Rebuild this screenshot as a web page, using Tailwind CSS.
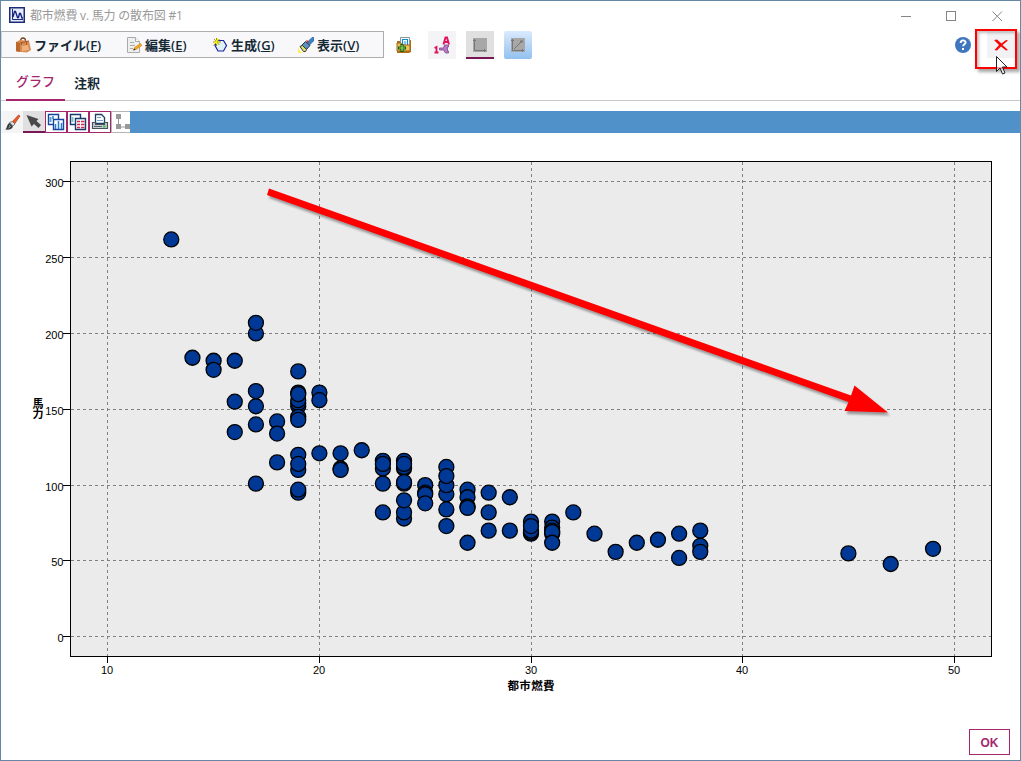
<!DOCTYPE html>
<html lang="ja">
<head>
  <meta charset="UTF-8" />
  <meta name="viewport" content="width=device-width, initial-scale=1.0" />
  <title>都市燃費 v. 馬力 の散布図 #1</title>
  <script src="https://cdn.jsdelivr.net/npm/@tailwindcss/browser@4"></script>
</head>
<body class="bg-white font-['Open_Sans','Noto_Sans_CJK_JP',sans-serif]">

  <div class="relative w-[1021px] h-[761px] flex flex-col overflow-hidden border border-[#6588a5] bg-white">

    <!-- title bar -->
    <header class="h-[30px] shrink-0 flex items-center pl-2 text-[#999999]">
      <svg class="w-4 h-4 shrink-0 -mt-[2px]" viewBox="0 0 16 16">
        <rect x=".75" y=".75" width="14.5" height="14.5" fill="#e4edf9" stroke="#1c2a78" stroke-width="1.5" />
        <path d="M3.500 2v10.500H14" fill="none" stroke="#1c2a78" />
        <path d="M4 10l1.500-5.500h1l2 6h1l1-4h1l1.500 4.500h1" fill="none" stroke="#101c80" stroke-width="1.300" />
      </svg>
      <span class="ml-[5px] w-[160px] whitespace-nowrap text-[12px] leading-4 tracking-[-0.2px]">都市燃費 v. 馬力 の散布図 #1</span>
      <svg class="ml-auto mr-[17px] w-[102px] h-[11px]" viewBox="0 0 102 11" fill="none" stroke="#858585">
        <path d="M0 5.500h10" />
        <rect x="45.500" y=".5" width="9" height="9" />
        <path d="M91.500 .5l9.500 9.500M101 .5l-9.500 9.500" />
      </svg>
    </header>

    <!-- menu and tool buttons -->
    <div class="h-[28px] shrink-0 flex items-center">
      <nav class="w-[383px] h-[27px] -mt-px flex items-center border border-l-[#d0d0d0] border-[#adadad] bg-[#f8f8fb] text-[13px] leading-5 font-semibold text-[#152935] whitespace-nowrap">
        <div class="w-[124px] pl-[13px] flex items-center gap-[3px]">
          <svg class="w-4 h-4 shrink-0" viewBox="0 0 16 16">
            <path d="M5.500 4c0-4 5-4 5 0" fill="none" stroke="#7c3e1b" stroke-width="1.300" />
            <path d="M1 5l4-2 9 1 2 9-4 2.500-11-1z" fill="#d98a51" />
            <path d="M1 5l4 1 0 9-4-1z" fill="#b9672f" />
            <path d="M5 6l9-2M6.500 5v3M11.500 5v3" stroke="#a55c2d" />
            <path d="M7 9l6-1 1 5-7 1z" fill="#efb17d" />
          </svg>
          <span>ファイル(<u>F</u>)</span>
        </div>
        <div class="w-[86px] flex items-center gap-[3px]">
          <svg class="w-4 h-4 shrink-0" viewBox="0 0 16 16">
            <path d="M1.500 .5h8l4 4v11h-12z" fill="#eef0ee" stroke="#aaa" />
            <path d="M9.500 .5v4h4" fill="#fff" stroke="#aaa" />
            <path d="M4 5.500h4M4 8.500h5M4 11.500h3" stroke="#aaa" />
            <path d="M7.500 13l1-2.500 6-4 1.500 2-6 4z" fill="#f5a51c" stroke="#c07a18" stroke-width=".5" />
            <path d="M7 13.500l1.500-2 1 1.200z" fill="#222" />
          </svg>
          <span>編集(<u>E</u>)</span>
        </div>
        <div class="w-[86px] flex items-center gap-[3px]">
          <svg class="w-4 h-4 shrink-0" viewBox="0 0 16 16">
            <path d="M6 3.500h5.500l3 5-3 5.500h-5.500l-3-5.500z" fill="#dff2fa" stroke="#1a22a0" stroke-width="1.200" />
            <path d="M4.500 1v8M1 5h8M2 2l5.500 6M7.500 2L1.500 8.500" stroke="#9b9200" />
            <path d="M4.500 3v4M3 5h4M5.500 1.500v2M2 5.500h2" stroke="#fff000" stroke-width="1.200" />
          </svg>
          <span>生成(<u>G</u>)</span>
        </div>
        <div class="flex items-center gap-[3px]">
          <svg class="w-4 h-4 shrink-0" viewBox="0 0 16 16">
            <path d="M0 16v-5l4 5z" fill="#fff04b" />
            <path d="M9 5.500l5-5h2v3l-5 5z" fill="#3b82cb" stroke="#235486" stroke-width=".6" />
            <path d="M3.500 8.500l4-4 4.500 4-4 4.500z" fill="#5d91bd" stroke="#253a51" />
            <path d="M2 9.500l2.500-1 4 4-1 2h-2z" fill="#e5de70" stroke="#343b35" />
            <path d="M8.500 3.500l2 2" stroke="#d22d20" stroke-width="1.500" />
          </svg>
          <span>表示(<u>V</u>)</span>
        </div>
      </nav>

      <svg class="ml-[12px] w-4 h-4 shrink-0" viewBox="0 0 16 16">
        <path d="M1 4h3v-1h11v12l-2 1H1z" fill="#ac7019" />
        <path d="M4.500 .5h9v8h-9z" fill="#fff" stroke="#8796a5" />
        <path d="M6.500 8V2.500h5V8M8 5h2M8 7h2" fill="none" stroke="#148bd5" stroke-width="1.200" />
        <path d="M1 6h4l1 2h8v6H1z" fill="#edc35e" stroke="#9c6418" />
        <path d="M6 7v8M2 11h8" stroke="#165d12" stroke-width="3.200" />
        <path d="M6 8v6M3 11h6" stroke="#8fe15c" stroke-width="1.200" />
      </svg>

      <div class="ml-[16px] w-7 h-7 shrink-0 bg-[#f4f4f7]">
        <svg class="w-7 h-7" viewBox="0 0 28 28">
          <path d="M15.500 13.500l2-7h1.500l2 7M16.500 11h3.500" fill="none" stroke="#e3115b" stroke-width="1.900" />
          <path d="M6.500 17l2-1v6.500M6.500 21.500h4" fill="none" stroke="#e3115b" stroke-width="1.800" />
          <path d="M11.500 17h4l1-3h4v2h-1v4h1v2h-3l-2-3h-4z" fill="#b77ac5" stroke="#81468e" stroke-width=".8" />
        </svg>
      </div>

      <div class="ml-[10px] w-7 h-7 shrink-0 bg-[#e0e0e0] border-b-2 border-[#7b1654]">
        <svg class="w-7 h-[26px]" viewBox="0 0 28 26">
          <rect x="7" y="7" width="14" height="14" fill="#a7a7a7" />
          <path d="M8.500 8v11.500H20M7 9.500h3M18.500 18v3" fill="none" stroke="#777" />
        </svg>
      </div>

      <div class="ml-[10px] w-7 h-7 shrink-0 rounded-[2px] bg-linear-to-b from-[#dbeafd] to-[#92c1ef]">
        <svg class="w-7 h-7" viewBox="0 0 28 28">
          <rect x="7" y="7" width="14" height="14" fill="#a7a7a7" />
          <path d="M8.500 8v11.500H20M7 9.500h3M18.500 18v3M10 18l7-7" fill="none" stroke="#777" />
          <circle cx="17.500" cy="10.500" r="1.300" fill="#777" />
        </svg>
      </div>

      <svg class="ml-auto w-4 h-4 shrink-0" viewBox="0 0 16 16">
        <circle cx="8" cy="8" r="8" fill="#3f77bf" />
        <path d="M5.600 6c0-3.500 5-3.300 5-.5 0 1.800-2.500 1.700-2.500 3.800" fill="none" stroke="#fff" stroke-width="1.900" />
        <path d="M7 11h2v2H7z" fill="#fff" />
      </svg>
      <div class="ml-4 mr-[5px] w-7 h-[26px] shrink-0 bg-[#f2f2f5]">
        <svg class="w-7 h-[26px]" viewBox="0 0 28 26">
          <path d="M7 8l3-.5 4.500 4 4.500-3.500 2 .5-5.500 4.500 5.500 5-2 .5-5-4-4 4-2.500-.5 4.500-5z" fill="#fa0505" />
        </svg>
      </div>
    </div>

    <!-- tabs -->
    <div class="h-[42px] shrink-0 flex items-end border-b border-[#c8c8c8] pl-[5px] text-[13px] leading-5 font-medium">
      <div class="-mb-px w-[59px] h-[33px] border-b-2 border-[#a6266e] text-center text-[#a6266e] pt-[3px]">グラフ</div>
      <div class="h-[31px] pl-[9px] pt-[4px] font-semibold text-[#152935]">注釈</div>
    </div>

    <!-- graph toolbar -->
    <div class="mt-[10px] h-[22px] shrink-0 flex bg-[#5191c9]">
      <div class="w-[22px] bg-[#f4f4f5]">
        <svg class="w-[22px] h-[22px]" viewBox="0 0 22 22">
          <path d="M11 11l6.500-7 1.500 1-5.500 8z" fill="#ef5a24" stroke="#a93a16" stroke-width=".7" />
          <path d="M8.500 11.500l3-1 2.500 2.500-2 2z" fill="#d8dddf" stroke="#555" stroke-width=".7" />
          <path d="M4 18.500c2.500-1 1.500-5.500 4.500-6.500l3.500 3.500c-1 3-4 3.500-8 3z" fill="#363c3c" />
          <path d="M8 14.500l1.500 1-2 1.500" fill="none" stroke="#aaa" />
        </svg>
      </div>
      <div class="w-[22px] bg-[#e0e0e0] border-b-2 border-[#7b1654]">
        <svg class="w-[22px] h-5" viewBox="0 0 22 20">
          <path d="M3.500 4l12 4-2 2 4.500 4-2.500 3-4.500-4-2.500 2.500z" fill="#484848" />
        </svg>
      </div>
      <div class="w-[22px] border border-[#a6266e] bg-white">
        <svg class="w-5 h-5" viewBox="0 0 20 20" fill="#fff" stroke="#19459b" stroke-width="1.400">
          <path d="M2.500 2.500h10v10h-10z" />
          <path d="M4.500 5v5M7 4v3" stroke="#52a2d1" stroke-width="2" />
          <path d="M7.500 7.500h10v10h-10z" />
          <path d="M9.500 17v-5M12.500 17v-8M15.500 17v-6" fill="none" stroke="#257bd2" stroke-width="1.500" />
        </svg>
      </div>
      <div class="w-[22px] border border-[#a6266e] bg-white">
        <svg class="w-5 h-5" viewBox="0 0 20 20" fill="#fff" stroke="#173d70" stroke-width="1.400">
          <path d="M2.500 2.500h10v10h-10z" />
          <path d="M4.500 5v5" stroke="#7bc3b9" stroke-width="2" />
          <path d="M7.500 6.500h10v11h-10z" />
          <path d="M9 9.500h3M13 9.500h3.500M9 12.500h3M13 12.500h3.500M9 15.500h3M13 15.500h3.500" stroke="#d32652" />
        </svg>
      </div>
      <div class="w-[22px] border border-[#a6266e] bg-white">
        <svg class="w-5 h-5" viewBox="0 0 20 20">
          <path d="M5.500 11.500v-9h6l3 3v6z" fill="#fff" stroke="#1e3f65" stroke-width="1.300" />
          <path d="M7 5.500h4M7 8.500h6" stroke="#69a3c8" />
          <path d="M2.500 10.500h3v2h9v-2h3v6h-15z" fill="#c5ced2" stroke="#485258" stroke-width="1.200" />
          <path d="M4 14.500h8" stroke="#576268" />
          <path d="M13 14.500h2.500" stroke="#47b647" stroke-width="2" />
        </svg>
      </div>
      <div class="w-[19px] border border-r-0 border-[#b5b5b5] bg-white">
        <svg class="w-[18px] h-5" viewBox="0 0 18 20">
          <path d="M6.500 5v10H16" fill="none" stroke="#999" />
          <path d="M4 2h5v5H4zM4 12h5v5H4zM13 12h5v5h-5z" fill="#999" />
        </svg>
      </div>
    </div>

    <!-- scatter plot, drawn below from the data -->
    <svg id="chart" class="w-[1019px] h-[586px] shrink-0" viewBox="1 133 1019 586" font-family="'Liberation Sans','Noto Sans CJK JP',sans-serif" font-size="11">
      <rect x="70.500" y="161.500" width="921" height="495" fill="#ebebeb" stroke="#000" />
      <g id="axes"></g>
      <g id="points" fill="#003896" stroke="#000" stroke-width="1.300"></g>
      <text x="531" y="690" text-anchor="middle" font-weight="700" font-size="11.500" textLength="47">都市燃費</text>
      <text x="38" y="408" text-anchor="middle" font-weight="700" font-size="11">馬</text>
      <text x="38" y="418" text-anchor="middle" font-weight="700" font-size="11">力</text>
      <path class="drop-shadow-[2px_3px_1px_rgb(0_0_0/0.35)]" d="M269 188.500L851 395.500L854.500 385.500L888 412.500L844.500 411L848.500 402L267 195z" fill="#ff0000" />
    </svg>

    <footer class="h-[40px] shrink-0 flex justify-end pt-[10px] pr-[10px]">
      <button class="w-[41px] h-[26px] pt-[2px] border border-[#a6266e] bg-white text-[12px] leading-4 font-bold text-[#a6266e] font-['Liberation_Sans',sans-serif]">OK</button>
    </footer>

    <!-- highlight round the close button, with the mouse pointer -->
    <div class="absolute left-[974px] top-[28px] w-[42px] h-[40px] border-2 border-[#ff0000] shadow-[3px_3px_3px_rgb(0_0_0/0.35),inset_2px_2px_3px_rgb(0_0_0/0.25)]"></div>
    <svg class="absolute left-[994px] top-[54px] w-[14px] h-[21px]" viewBox="0 0 14 21">
      <path d="M1.500 1.500v15l3.500-3.500 2.500 6 2.500-1-2.500-6h4.500z" fill="#fff" fill-opacity=".6" stroke="#222" />
    </svg>
  </div>

  <script>
    // city mileage -> horsepower values, in drawing order
    const data = {
      13: [262], 14: [184], 15: [182, 176], 16: [182, 155, 135],
      17: [200, 207, 162, 152, 140, 101], 18: [142, 134, 115],
      19: [175, 152, 154, 156, 161, 160, 145, 143, 120, 110, 114, 95, 97],
      20: [161, 156, 121], 21: [121, 111, 110], 22: [123],
      23: [116, 111, 114, 101, 82], 24: [116, 111, 112, 114, 101, 102, 78, 82, 90],
      25: [100, 95, 94, 88], 26: [94, 100, 112, 106, 84, 73],
      27: [97, 92, 86, 85, 62], 28: [95, 82, 70], 29: [92, 70],
      30: [68, 69, 70, 76, 73], 31: [76, 72, 70, 68, 69, 62],
      32: [82], 33: [68], 34: [56], 35: [62], 36: [64],
      37: [68, 52], 38: [70, 60, 56], 45: [55], 47: [48], 49: [58]
    };
    const px = v => 107.8 + (v - 10) * 21.16;
    const py = v => 636.8 - v * 1.5167;
    const snap = v => Math.floor(v) + 0.5;

    let axes = "";
    for (let v = 10; v <= 50; v += 10) {
      const x = snap(px(v));
      axes += `<path d="M${x} 162V656" stroke="#808080" stroke-dasharray="3 3" /><path d="M${x} 657v6" stroke="#000" />`;
      axes += `<text x="${x - 0.5}" y="674" text-anchor="middle">${v}</text>`;
    }
    for (let v = 0; v <= 300; v += 50) {
      const y = snap(py(v));
      axes += `<path d="M71 ${y}H991" stroke="#808080" stroke-dasharray="3 3" /><path d="M63 ${y}h7" stroke="#000" />`;
      axes += `<text x="63.5" y="${y + 5}" text-anchor="end">${v}</text>`;
    }
    document.getElementById("axes").innerHTML = axes;

    let points = "";
    for (const mpg in data) {
      for (const hp of data[mpg]) {
        points += `<circle cx="${px(+mpg)}" cy="${py(hp)}" r="7.5" />`;
      }
    }
    document.getElementById("points").innerHTML = points;
  </script>

</body>
</html>
